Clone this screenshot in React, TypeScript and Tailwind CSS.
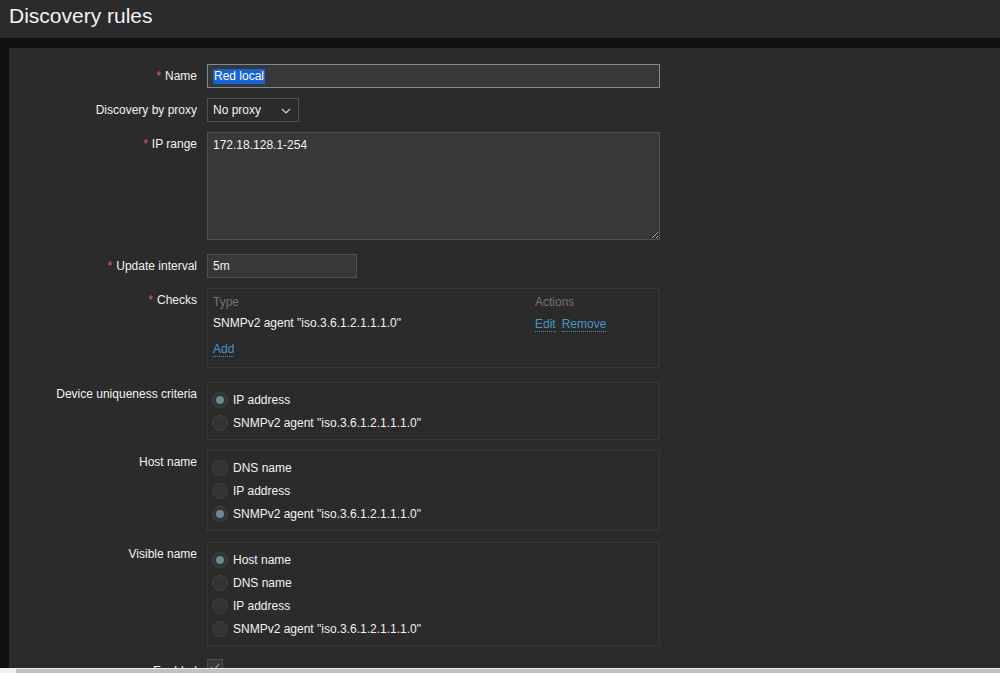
import React from "react";

const font = { fontFamily: '"Liberation Sans", Arial, sans-serif' };

function Req() {
  return <span className="text-[#e45959] mr-[4px]">*</span>;
}

function Label({ children, req }: { children: React.ReactNode; req?: boolean }) {
  return (
    <div className="w-[188px] shrink-0 text-right leading-[14px] pt-[5px]">
      {req && <Req />}
      {children}
    </div>
  );
}

function Radio({ checked, label }: { checked?: boolean; label: string }) {
  return (
    <div className="h-[23px] flex items-center">
      <span className="w-[16px] h-[16px] rounded-full bg-[#333333] border border-[#414141] flex items-center justify-center shrink-0 ml-[-1px]">
        {checked && <span className="w-[8px] h-[8px] rounded-full bg-[#6c8796]" />}
      </span>
      <span className="ml-[5px] leading-[14px]">{label}</span>
    </div>
  );
}

function RadioBox({ items, checked }: { items: string[]; checked: number }) {
  return (
    <div className="w-[453px] border border-[#383838] py-[5px] pl-[5px]">
      {items.map((it, i) => (
        <Radio key={i} label={it} checked={i === checked} />
      ))}
    </div>
  );
}

function Link({ children }: { children: React.ReactNode }) {
  return (
    <span className="inline-block text-[#4796c4] leading-[14px] border-b border-dotted border-[#4796c4]">
      {children}
    </span>
  );
}

export default function App() {
  const snmp = 'SNMPv2 agent "iso.3.6.1.2.1.1.1.0"';
  return (
    <div className="h-[673px] w-[1000px] flex flex-col overflow-hidden bg-[#0e1012] text-[12px] text-[#f2f2f2]" style={font}>
      <div className="h-[38px] shrink-0 bg-[#2b2b2b] flex items-start pl-[9px] pt-[3px]">
        <h1 className="text-[21px] leading-[26px] text-[#f2f2f2] font-normal">Discovery rules</h1>
      </div>
      <div className="flex-1 min-h-0 overflow-hidden pl-[9px] pt-[10px]">
        <div className="bg-[#2b2b2b] h-full pt-[16px]">
          {/* Name */}
          <div className="flex">
            <Label req>Name</Label>
            <div className="ml-[10px] w-[453px] h-[24px] bg-[#383838] border border-[#768d99] flex items-center pl-[5px]">
              <span className="bg-[#1763d6] text-white leading-[15px] px-[1px]">Red local</span>
            </div>
          </div>
          {/* Proxy */}
          <div className="flex mt-[10px]">
            <Label>Discovery by proxy</Label>
            <div className="ml-[10px] w-[92px] h-[24px] bg-[#2b2b2b] border border-[#4f4f4f] flex items-center pl-[5px] pr-[7px] justify-between">
              <span className="leading-[14px]">No proxy</span>
              <svg width="10" height="6" viewBox="0 0 10 6" className="mt-[1px]">
                <path d="M1 1 L5 5 L9 1" fill="none" stroke="#d0d0d0" strokeWidth="1.2" />
              </svg>
            </div>
          </div>
          {/* IP range */}
          <div className="flex mt-[10px]">
            <Label req>IP range</Label>
            <textarea
              readOnly
              defaultValue="172.18.128.1-254"
              className="ml-[10px] w-[453px] h-[108px] bg-[#383838] border border-[#4f4f4f] px-[5px] pt-[5px] leading-[14px] text-[12px] text-[#f2f2f2] outline-none block"
              style={font}
            />
          </div>
          {/* Update interval */}
          <div className="flex mt-[14px]">
            <Label req>Update interval</Label>
            <div className="ml-[10px] w-[150px] h-[24px] bg-[#383838] border border-[#4f4f4f] flex items-center pl-[5px]">
              <span className="leading-[14px]">5m</span>
            </div>
          </div>
          {/* Checks */}
          <div className="flex mt-[10px]">
            <Label req>Checks</Label>
            <div className="ml-[10px] w-[453px] h-[80px] border border-[#383838] pl-[5px] pt-[3px]">
              <div className="grid grid-cols-[322px_1fr] h-[20px] items-center text-[#737373]">
                <span>Type</span>
                <span>Actions</span>
              </div>
              <div className="grid grid-cols-[322px_1fr] h-[22px] items-center">
                <span>{snmp}</span>
                <span className="flex gap-[6px] pt-[2px]">
                  <Link>Edit</Link>
                  <Link>Remove</Link>
                </span>
              </div>
              <div className="h-[22px] mt-[4px] flex items-center pt-[1px]">
                <Link>Add</Link>
              </div>
            </div>
          </div>
          {/* Device uniqueness */}
          <div className="flex mt-[14px]">
            <Label>Device uniqueness criteria</Label>
            <div className="ml-[10px]">
              <RadioBox items={["IP address", snmp]} checked={0} />
            </div>
          </div>
          {/* Host name */}
          <div className="flex mt-[10px]">
            <Label>Host name</Label>
            <div className="ml-[10px]">
              <RadioBox items={["DNS name", "IP address", snmp]} checked={2} />
            </div>
          </div>
          {/* Visible name */}
          <div className="flex mt-[11px]">
            <Label>Visible name</Label>
            <div className="ml-[10px]">
              <RadioBox items={["Host name", "DNS name", "IP address", snmp]} checked={0} />
            </div>
          </div>
          {/* Enabled */}
          <div className="flex mt-[13px]">
            <Label>Enabled</Label>
            <div className="ml-[10px] w-[16px] h-[16px] bg-[#383838] border border-[#4f4f4f] flex items-center justify-center">
              <svg width="10" height="8" viewBox="0 0 10 8">
                <path d="M1 4 L4 7 L9 1" fill="none" stroke="#8a8a8a" strokeWidth="1.4" />
              </svg>
            </div>
          </div>
        </div>
      </div>
      <div className="h-[5px] shrink-0 bg-[#f1f1f1] pl-[16px] pt-[1px]">
        <div className="h-full bg-[#c1c1c1]" />
      </div>
    </div>
  );
}
